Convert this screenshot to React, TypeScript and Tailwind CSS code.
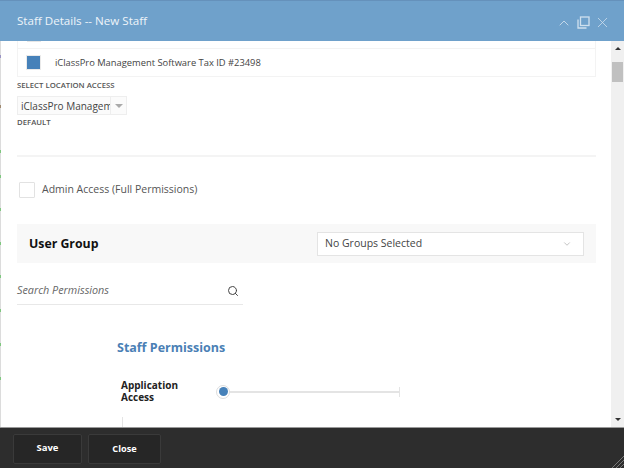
import { ChevronDown, ChevronUp, Search, X } from 'lucide-react';

const font = { fontFamily: '"Open Sans", sans-serif' };

// bits of the page behind the dialog that show along its left edge
const edgeDots = [
  { y: 14, color: '#9a94c4' },
  { y: 64, color: '#a08a70' },
  { y: 109, color: '#7fc77f' },
  { y: 134, color: '#7fc77f' },
  { y: 167, color: '#7fc77f' },
  { y: 201, color: '#7fc77f' },
  { y: 234, color: '#7fc77f' },
  { y: 268, color: '#7fc77f' },
  { y: 302, color: '#7fc77f' },
  { y: 336, color: '#7fc77f' },
];

function Scrollbar() {
  return (
    <div className="flex w-[13px] shrink-0 flex-col items-center bg-[#f0f0f0]">
      <div className="mt-[6px] h-0 w-0 border-x-[3px] border-b-[3px] border-x-transparent border-b-[#333]" />
      <div className="mt-[12px] h-[20px] w-[11px] bg-[#c0c0c0]" />
      <div className="mt-auto mb-[6px] h-0 w-0 border-x-[3px] border-t-[3px] border-x-transparent border-t-[#333]" />
    </div>
  );
}

export default function App() {
  return (
    <div className="flex h-[468px] w-[624px] flex-col overflow-hidden bg-white" style={font}>
      <header className="flex h-[41px] shrink-0 items-center justify-between border-t border-[#6591bb] bg-[#6fa1cb] pr-[13px] pl-[17px]">
        <h1 className="text-[11.6px] text-[#eef4f9]">Staff Details -- New Staff</h1>
        <div className="mt-[3px] flex items-center gap-[4px] text-[#cfe0ee]">
          <ChevronUp size={16} strokeWidth={1.3} />
          <svg className="ml-[1px]" width="13" height="13" viewBox="0 0 13 13" fill="none" stroke="currentColor" strokeWidth="1.3">
            <rect x="3.5" y="1" width="8.5" height="8.5" />
            <path d="M1 3.5v8.5h8.5" />
          </svg>
          <X size={17} strokeWidth={1.1} />
        </div>
      </header>

      <div className="relative flex min-h-0 flex-1 border-l border-[#dcdcdc]">
        {edgeDots.map((d) => (
          <span key={d.y} className="absolute -left-px h-[3px] w-px" style={{ top: d.y, backgroundColor: d.color }} />
        ))}
        <main className="flex min-w-0 flex-1 flex-col overflow-hidden pr-[15px] pl-4 text-[#444]">
          <div className="h-[7px] shrink-0 border-x border-[#f3f3f3]">
            <div className="ml-[9px] h-px w-[14px] bg-[#e6e6e6]" />
          </div>
          <div className="flex h-[29px] shrink-0 items-center border border-[#f3f3f3] pl-[8px]">
            <span className="h-[15px] w-[15px] border border-[#eaeaea] bg-[#4681b9] bg-clip-padding" />
            <span className="ml-[14px] pt-[1px] text-[9.35px]">iClassPro Management Software Tax ID #23498</span>
          </div>
          <label className="mt-[3px] text-[7.75px] leading-[11px] font-semibold text-[#555] uppercase">Select Location Access</label>
          <div className="mt-[5px] flex h-[19px] w-[110px] shrink-0 border border-[#eeeeee] bg-[#fbfbfb]">
            <span className="w-[92px] overflow-hidden pl-[3px] text-[10px] leading-[19px] whitespace-nowrap">iClassPro Management</span>
            <span className="flex flex-1 items-center justify-center border-l border-[#eeeeee]">
              <span className="h-0 w-0 border-x-[4px] border-t-[4px] border-x-transparent border-t-[#aaa]" />
            </span>
          </div>
          <label className="mt-[2px] text-[7.75px] leading-[11px] font-semibold text-[#555] uppercase">Default</label>
          <hr className="mt-[27px] border-t-2 border-[#f4f4f4]" />
          <div className="mt-[25px] flex shrink-0 items-center pl-[2px]">
            <span className="h-[16px] w-[16px] rounded-[1px] border border-[#e2e2e2]" />
            <span className="ml-[7px] text-[10.5px] text-[#555]">Admin Access (Full Permissions)</span>
          </div>
          <section className="mt-[26px] flex h-[39px] shrink-0 items-center justify-between bg-[#f8f8f8] pr-[12px] pl-[12px]">
            <h2 className="pt-[1px] text-[12.3px] font-bold text-[#111]">User Group</h2>
            <div className="flex h-[24px] w-[267px] items-center justify-between border border-[#e4e4e4] bg-white pr-[11px] pl-[7px] text-[10.5px]">
              No Groups Selected
              <ChevronDown size={10} strokeWidth={1.2} className="text-[#888]" />
            </div>
          </section>
          <div className="mt-[14px] flex h-[28px] w-[226px] shrink-0 items-center justify-between border-b border-[#e8e8e8] pr-[4px]">
            <span className="text-[10.8px] text-[#666] italic">Search Permissions</span>
            <Search size={12} className="text-[#444]" />
          </div>
          <div className="mt-[34px] ml-[100px]">
            <h3 className="text-[12.5px] font-bold text-[#4a80b5]">Staff Permissions</h3>
            <div className="mt-[21px] flex items-start">
              <div className="w-[99px] pl-[4px] text-[10px] leading-[12px] font-bold text-[#222]">
                Application<br />Access
              </div>
              <div className="relative mt-[6px] h-[14px] w-[184px]">
                <div className="absolute top-[6px] left-[2px] h-[2.5px] w-[181px] bg-[#e4e4e4]" />
                <div className="absolute top-[2px] right-0 h-[10px] w-px bg-[#e4e4e4]" />
                <div className="absolute top-0 left-0 flex h-[14px] w-[14px] items-center justify-center rounded-full border-[1.5px] border-[#dddddd] bg-white">
                  <div className="h-[9px] w-[9px] rounded-full bg-[#4681b9]" />
                </div>
              </div>
            </div>
            <div className="mt-[14px] ml-[5px] h-[10px] w-px bg-[#e4e4e4]" />
          </div>
        </main>
        <Scrollbar />
      </div>

      <footer className="relative flex h-[41px] shrink-0 items-center gap-[6px] border-t border-[#999] bg-[#2d2d2d] pt-[1px] pl-[13px]">
        <button className="h-[30px] w-[69px] rounded-[2px] border border-[#3a3a3a] bg-[#262626] text-[9.5px] font-bold text-white">Save</button>
        <button className="h-[30px] w-[73px] rounded-[2px] border border-[#3a3a3a] bg-[#262626] text-[9.2px] font-bold text-white">Close</button>
        <svg className="absolute right-0 bottom-0" width="12" height="12" viewBox="0 0 12 12" stroke="#777" fill="none">
          <path d="M0 12 12 0M4 12l8-8M8 12l4-4" />
        </svg>
      </footer>
    </div>
  );
}
